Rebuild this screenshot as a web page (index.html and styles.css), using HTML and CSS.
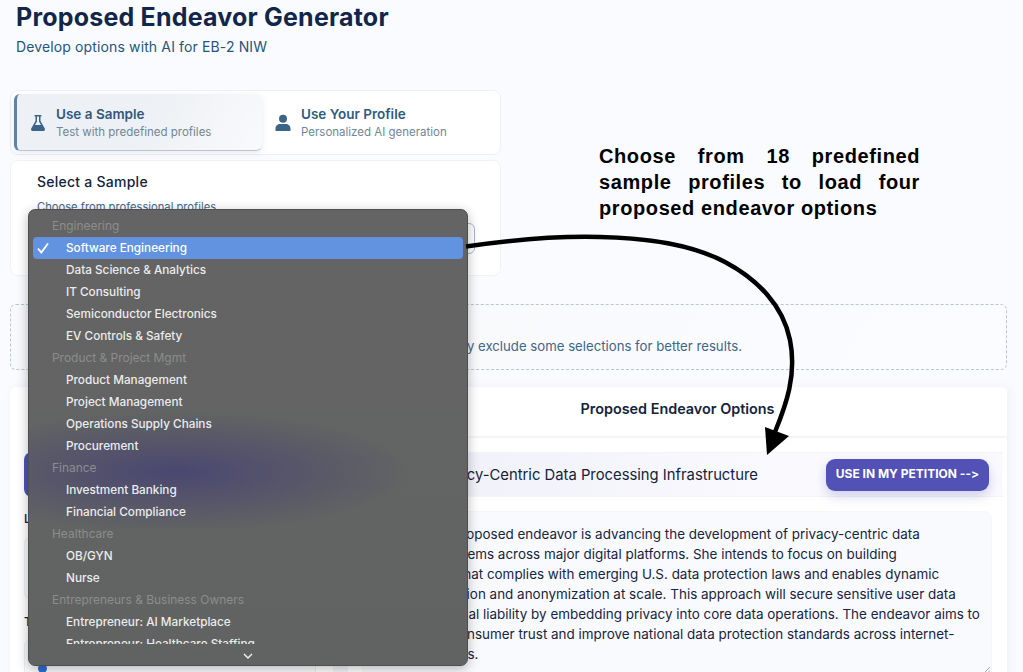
FILE: index.html
```html
<!DOCTYPE html>
<html lang="en">
<head>
<meta charset="utf-8">
<title>Proposed Endeavor Generator</title>
<link rel="stylesheet" href="styles.css">
</head>
<body>
<main class="page">
  <header class="head">
    <h1>Proposed Endeavor Generator</h1>
    <p>Develop options with AI for EB-2 NIW</p>
  </header>

  <section class="narrow">
    <div class="tabs">
      <div class="tab active">
        <svg class="tab-icon" viewBox="0 0 16 18"><path d="M4.600 1h6.800v1.500h-.9v4.600l4.300 7.400c.6 1.100-.1 2.500-1.400 2.500H2.600c-1.300 0-2-1.400-1.400-2.500l4.300-7.400V2.500h-.9zM7 2.500v5L5 11h6L9 7.500v-5z" fill-rule="evenodd"/><path d="M5 11h6l2.500 4.600H2.500z"/></svg>
        <div><div class="tab-title">Use a Sample</div><div class="tab-sub">Test with predefined profiles</div></div>
      </div>
      <div class="tab">
        <svg class="tab-icon" viewBox="0 0 16 18"><circle cx="8" cy="4.800" r="4"/><path d="M.5 17v-2.500C.5 11.500 3 10 5 10h6c2 0 4.500 1.500 4.500 4.500V17z"/></svg>
        <div><div class="tab-title">Use Your Profile</div><div class="tab-sub">Personalized AI generation</div></div>
      </div>
    </div>
    <div class="sample">
      <h2>Select a Sample</h2>
      <p>Choose from professional profiles</p>
      <div class="select">Software Engineering</div>
    </div>
  </section>

  <section class="note">
    <p>Selecting a sample profile replaces your current choices and may exclude some selections for better results.</p>
  </section>

  <section class="options">
    <aside class="left">
      <div class="gen-btn">Generate</div>
      <div class="label">Location</div>
      <div class="field tall"></div>
      <div class="label">Topic</div>
      <div class="field"><span class="dot"></span></div>
    </aside>
    <div class="right">
      <h3>Proposed Endeavor Options</h3>
      <div class="opt-head">
        <span class="opt-title">1. Privacy-Centric Data Processing Infrastructure</span>
        <span class="use-btn">USE IN MY PETITION --&gt;</span>
      </div>
      <div class="opt-body">
        <span>Her central proposed endeavor is advancing the development of privacy-centric data</span>
        <span>database systems across major digital platforms. She intends to focus on building</span>
        <span>architecture that complies with emerging U.S. data protection laws and enables dynamic</span>
        <span>data segregation and anonymization at scale. This approach will secure sensitive user data</span>
        <span>and shrink legal liability by embedding privacy into core data operations. The endeavor aims to</span>
        <span>strengthen consumer trust and improve national data protection standards across internet-</span>
        <span>based systems.</span>
        <svg class="grip" viewBox="0 0 6 6"><path d="M0 6 6 0M3.500 6 6 3.500"/></svg>
      </div>
    </div>
  </section>
</main>

<div class="menu">
  <ul class="menu-list">
    <li class="grp">Engineering</li>
    <li class="sel"><svg class="check" viewBox="0 0 12 12"><path d="M1 6.500 4.300 10.500 11 1.500"/></svg>Software Engineering</li>
    <li>Data Science &amp; Analytics</li>
    <li>IT Consulting</li>
    <li>Semiconductor Electronics</li>
    <li>EV Controls &amp; Safety</li>
    <li class="grp">Product &amp; Project Mgmt</li>
    <li>Product Management</li>
    <li>Project Management</li>
    <li>Operations Supply Chains</li>
    <li>Procurement</li>
    <li class="grp">Finance</li>
    <li>Investment Banking</li>
    <li>Financial Compliance</li>
    <li class="grp">Healthcare</li>
    <li>OB/GYN</li>
    <li>Nurse</li>
    <li class="grp">Entrepreneurs &amp; Business Owners</li>
    <li>Entrepreneur: AI Marketplace</li>
    <li>Entrepreneur: Healthcare Staffing</li>
  </ul>
  <svg class="chev" viewBox="0 0 10 6"><path d="M1 1 5 5 9 1"/></svg>
</div>

<p class="callout">Choose from 18 predefined sample profiles to load four proposed endeavor options</p>

<svg class="arrow" viewBox="0 0 1023 672">
  <path class="arrow-line" d="M466 246.500C510 240 560 236 600 237C650 238 695 246 725 262C757 279 783 305 790 340C797 375 786 405 775 432"/>
  <path class="arrow-head" d="M765 427 789 436 767 455z"/>
</svg>
</body>
</html>
```

FILE: styles.css
```css
* { box-sizing: border-box; }
html, body { margin: 0; height: 672px; overflow: hidden; }
body {
  font-family: "Inter", "Liberation Sans", sans-serif;
  font-variant-ligatures: none;
  font-feature-settings: "calt" 0;
  background: #fafbfe;
  color: #0f2440;
  position: relative;
}
.page { padding: 0 16px 0 10px; height: 672px; overflow: hidden; }

.head { padding-left: 6px; height: 90px; }
.head h1 { margin: 0; padding-top: 2px; font-size: 25px; line-height: 30px; font-weight: 700; letter-spacing: .2px; color: #11264a; }
.head p { margin: 0; padding-top: 6px; font-size: 14px; line-height: 18px; letter-spacing: .13px; color: #25557c; }

.narrow { width: 491px; }
.tabs {
  display: flex; height: 65px; padding: 3px 0 3px 3px;
  background: #fff; border: 1px solid #edf0f5; border-radius: 8px;
}
.tab { display: flex; flex: none; align-items: center; gap: 10px; width: 237px; padding-left: 13px; color: #355c7d; }
.tab.active {
  width: 248px; padding-top: 1px;
  background: linear-gradient(120deg, #edf0f4 50%, #f9fafc 100%);
  border-left: 3px solid #5c84a8; border-bottom: 1px solid #b7c5d4;
  border-radius: 6px;
  box-shadow: 0 2px 6px rgba(60, 80, 110, .12);
}
.tab-icon { width: 16px; height: 18px; fill: #3c6488; flex: none; }
.tab-title { font-size: 13.500px; font-weight: 600; line-height: 18px; color: #2f5a7e; }
.tab-sub { font-size: 11.500px; line-height: 18px; color: #6f8799; }

.sample {
  height: 116px; margin-top: 5px; padding: 12px 26px 0;
  background: #fff; border: 1px solid #f0f2f6; border-radius: 8px;
  position: relative;
}
.sample h2 { margin: 0; font-size: 14px; font-weight: 500; line-height: 18px; letter-spacing: .25px; color: #14233a; }
.sample p { margin: 8px 0 0; font-size: 11.200px; line-height: 16px; color: #48688a; }
.select {
  margin: 8px -1px 0 -1px; height: 31px; padding: 0 10px; line-height: 30px; font-size: 12px;
  border: 1px solid #a8b4dc; border-radius: 6px;
}

.note {
  height: 66px; margin-top: 28px; padding: 32px 264px 0 0;
  background: linear-gradient(120deg, #f8f9fb 30%, #fbfcff 100%);
  border: 1px dashed #b8c6d6; border-radius: 6px;
}
.note p { margin: 0; font-size: 13.200px; line-height: 18px; color: #436688; white-space: nowrap; text-align: right; }

.options {
  display: grid; grid-template-columns: 338px 1fr; height: 300px; margin-top: 17px;
  background: #fff; border-radius: 6px 6px 0 0;
  box-shadow: 2px 0 8px rgba(110, 120, 180, .08);
}
.left { padding: 65px 17px 0 14px; border-right: 15px solid #f3f4f7; }
.gen-btn { height: 45px; background: #4f51b8; border-radius: 8px; color: #fff; font-size: 13px; line-height: 45px; text-align: center; }
.label { margin-top: 13px; font-size: 12px; line-height: 18px; font-weight: 500; color: #14233a; }
.field { height: 62px; margin-top: 9px; border: 1px solid #eceef2; border-radius: 6px; background: #fafbfc; position: relative; }
.tall + .label { margin-top: 14px; }
.dot { position: absolute; left: 13px; top: 23px; width: 9px; height: 9px; border-radius: 50%; background: #2b6fd8; }

.right { min-width: 0; padding-right: 4px; }
.right h3 {
  margin: 0 -4px 0 0; height: 51px; text-align: center; font-size: 14.400px; line-height: 44px; font-weight: 600; color: #14233a;
  border-bottom: 2px solid #f4f5f9;
}
.opt-head {
  display: flex; justify-content: space-between; align-items: center;
  height: 45px; margin-top: 14px; padding: 1px 14px 0 0;
  background: linear-gradient(90deg, #eeeff8, #fafafe 70%);
  border-top: 1px solid #f3f4f8; border-bottom: 1px solid #f3f4f8;
}
.opt-title { padding-left: 69px; font-size: 14.800px; color: #14233a; white-space: nowrap; }
.use-btn {
  display: block; width: 163px; height: 32px; text-align: center; line-height: 30px;
  font-size: 12px; font-weight: 700; color: #fff; white-space: nowrap;
  background: #5251b6; border-radius: 9px;
  box-shadow: 0 5px 12px rgba(82, 81, 182, .25);
}
.opt-body {
  position: relative;
  height: 170px; margin: 14px 11px 0 14px; padding: 12px 0 0 16px;
  background: #f9fafd; border: 1px solid #f5f6fa; border-radius: 8px;
  font-size: 13.440px; line-height: 20px; color: #17243f;
}
.opt-body span { display: block; white-space: nowrap; }
.grip { position: absolute; right: 1px; top: 155px; width: 6px; height: 6px; fill: none; stroke: #8d8f94; stroke-width: .8; }

.menu {
  position: absolute; left: 28px; top: 209px; width: 440px; height: 457px;
  padding-top: 5px;
  background:
    radial-gradient(ellipse 235px 60px at 145px 262px, rgba(70, 66, 115, .85), rgba(70, 66, 115, 0) 100%),
    linear-gradient(180deg, #646464, #616362);
  border: 1px solid #4f4f4f; border-radius: 7px;
  box-shadow: 0 3px 12px rgba(0, 0, 0, .28);
  font-size: 11.750px; font-weight: 500; color: #ececec;
}
.menu-list { list-style: none; margin: 0; padding: 0 4px; height: 429px; overflow: hidden; }
.menu-list li { position: relative; height: 22px; line-height: 22px; padding-left: 33px; white-space: nowrap; border-radius: 4px; }
.menu-list .grp { padding-left: 19px; font-size: 11.950px; color: #8b8d8d; font-weight: 400; }
.menu-list .sel { background: #6293e0; color: #fff; }
.check { position: absolute; left: 4px; top: 5px; width: 12px; height: 12px; fill: none; stroke: #fff; stroke-width: 1.900; }
.chev { display: block; width: 10px; height: 6px; margin: 9px 0 0 214px; fill: none; stroke: #f2f2f2; stroke-width: 1.400; }

.callout {
  position: absolute; left: 599px; top: 143px; width: 321px; margin: 0;
  font-family: "Liberation Sans", Arial, sans-serif; font-size: 20px; line-height: 26px; font-weight: 700;
  letter-spacing: .6px; text-align: justify; color: #000;
}
.arrow { position: absolute; left: 0; top: 0; width: 1023px; height: 672px; pointer-events: none; }
.arrow-line { fill: none; stroke: #000; stroke-width: 4.500; }
.arrow-head { fill: #000; }
```
